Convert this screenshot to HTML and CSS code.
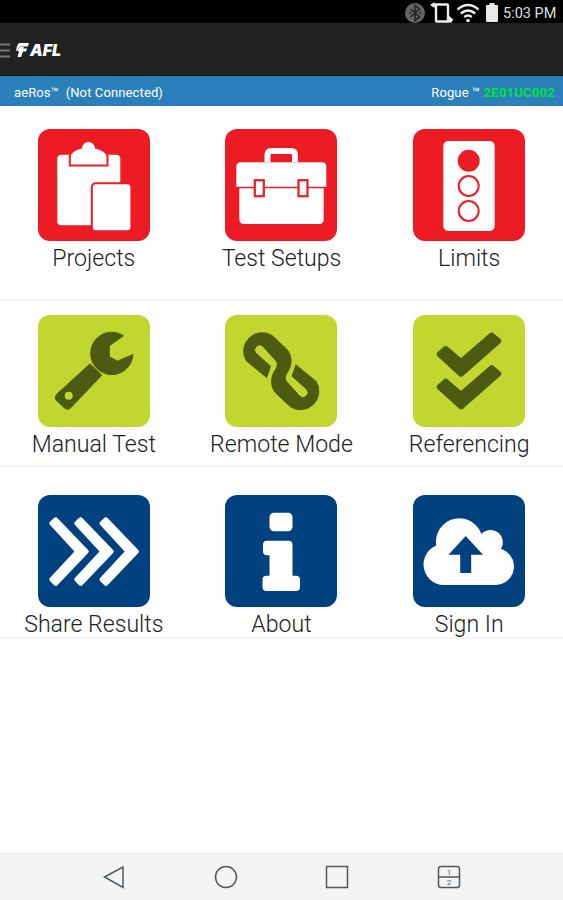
FILE: index.html
```html
<!DOCTYPE html>
<html lang="en">
<head>
    <meta charset="UTF-8">
    <meta name="viewport" content="width=device-width, initial-scale=1.0">
    <title>aeRos</title>
    <link rel="stylesheet" href="styles.css">
</head>
<body>
    <div class="status-bar">
        <svg class="bluetooth" width="20" height="20" viewBox="0 0 20 20">
            <circle cx="10" cy="10" r="10" fill="#646464"/>
            <path d="M5.500 6l9 8-4.500 3.500V2.500L14.500 6l-9 8M4 10h2M14 10h2" fill="none" stroke="#222" stroke-width="1.500"/>
        </svg>
        <svg class="rotate" width="24" height="22" viewBox="0 0 24 22">
            <rect x="6" y="2.500" width="12" height="17" rx="1" fill="none" stroke="#eee" stroke-width="2.400"/>
            <path d="M0 3l4.500-3v1.500H7v3H4.500V6zM23.500 17.500L19 14v2.500h-1.500v4h4.500v-1.500z" fill="#eee"/>
        </svg>
        <svg class="wifi" width="24" height="20" viewBox="0 0 24 20">
            <path d="M1.500 6.500Q12-2.500 22.500 6.500M4.800 10.500Q12 4.300 19.200 10.500M8.200 14Q12 11 15.800 14" fill="none" stroke="#eee" stroke-width="2.400"/>
            <circle cx="12" cy="17.500" r="1.800" fill="#eee"/>
        </svg>
        <svg class="battery" width="12" height="19" viewBox="0 0 12 19">
            <path d="M3.500 0h5v2H11q1 0 1 1v15q0 1-1 1H1q-1 0-1-1V3q0-1 1-1h2.500z" fill="#e8e8e8"/>
        </svg>
        <span class="time">5:03 PM</span>
    </div>

    <div class="header">
        <svg class="menu" width="10" height="15" viewBox="0 0 10 15">
            <path d="M0 1.500h10M0 7.500h10M0 13.500h10" stroke="#777" stroke-width="1.800"/>
        </svg>
        <svg class="logo" width="13" height="14" viewBox="0 0 13 14">
            <path d="M3 0h10l-1.200 3.500H8L7.200 5.500H11L10 8.500H7L5 14H1.500L3 8.500 0 7.500 1 3z" fill="#fff"/>
            <path d="M1 7.500Q3 3 8 3" fill="none" stroke="#777" stroke-width=".7"/>
        </svg>
        <span class="brand">AFL</span>
    </div>

    <div class="connection">
        <span>aeRos™&nbsp; (Not Connected)</span>
        <span>Rogue ™ <b>2E01UC002</b></span>
    </div>

    <div class="main">
        <div class="row row-red">
            <div class="item">
                <svg class="tile" viewBox="0 0 112 112">
                    <rect x="19.300" y="25.700" width="63" height="70.500" rx="4" fill="#fff"/>
                    <path d="M31.800 36.500V27Q33 21 43 18.800Q44.500 12 50.500 12Q56.500 12 58 18.800Q68 21 69.500 27V36.500z" fill="#fff" stroke="#ed1c24" stroke-width="2"/>
                    <rect x="53.800" y="54.200" width="39.600" height="48" rx="4" fill="#fff" stroke="#ed1c24" stroke-width="2"/>
                </svg>
                <span>Projects</span>
            </div>
            <div class="item">
                <svg class="tile" viewBox="0 0 112 112">
                    <path d="M42.500 33V26Q42.500 22 46.500 22H66Q70 22 70 26V33" fill="none" stroke="#fff" stroke-width="6"/>
                    <path d="M16 33.300H97Q101.300 33.300 101.300 38V57.700H11.300V38Q11.300 33.300 16 33.300z" fill="#fff"/>
                    <path d="M14.300 59.200H98.700V90Q98.700 95 94 95H19Q14.300 95 14.300 90z" fill="#fff"/>
                    <rect x="29.800" y="51.200" width="9" height="16" fill="#fff" stroke="#ed1c24" stroke-width="2.200"/>
                    <rect x="73.500" y="51.200" width="9" height="16" fill="#fff" stroke="#ed1c24" stroke-width="2.200"/>
                </svg>
                <span>Test Setups</span>
            </div>
            <div class="item">
                <svg class="tile" viewBox="0 0 112 112">
                    <rect x="30.300" y="12" width="51.400" height="90" rx="5" fill="#fff"/>
                    <g fill="#fff" stroke="#ed1c24" stroke-width="2">
                        <circle cx="55.700" cy="31.700" r="10" fill="#ed1c24"/>
                        <circle cx="55.700" cy="57" r="10"/>
                        <circle cx="55.700" cy="82" r="10"/>
                    </g>
                </svg>
                <span>Limits</span>
            </div>
        </div>

        <div class="row row-green">
            <div class="item">
                <svg class="tile" viewBox="0 0 112 112">
                    <g fill="#4d5a12" stroke="#4d5a12" stroke-width="1" stroke-linejoin="round">
                        <path d="M85.500 20.700A21.200 21.200 0 1 0 95 39.500L79.500 46.200 71.300 41.700V30.700z"/>
                        <path d="M52 48.800L63.800 60.200 33 92.500Q29.500 96 26 92.500L19 86Q15.500 82.500 19 79z"/>
                    </g>
                    <circle cx="30.700" cy="80.700" r="4" fill="#c1d72f"/>
                </svg>
                <span>Manual Test</span>
            </div>
            <div class="item">
                <svg class="tile" viewBox="0 0 112 112">
                    <path d="M41.700 62.500L21.500 46A18.500 18.500 0 0 1 47 20.500L61.500 34C67 40 67.500 49 63 56.500C60.500 60 59.500 63 61 66L75 81.500A5 5 0 0 0 82 74.500L67.100 61.200 70.900 49.900 91.100 66.400A18.500 18.500 0 0 1 65.600 91.900L51.100 78.400C45.600 72.400 45.100 63.400 49.600 55.900C52.100 52.400 53.100 49.400 51.600 46.400L37.600 30.900A5 5 0 0 0 30.600 37.900L45.500 51.200z" fill="#4d5a12" stroke="#4d5a12" stroke-width="1"/>
                </svg>
                <span>Remote Mode</span>
            </div>
            <div class="item">
                <svg class="tile" viewBox="0 0 112 112">
                    <g fill="#4d5a12" stroke="#4d5a12" stroke-width="6" stroke-linejoin="round">
                        <path d="M26.800 39.300L32.700 34 48 47 78.700 20.500 85.200 26 48 58.700z"/>
                        <path d="M26.800 72L32.700 66.700 48 79.700 78.700 53.200 85.200 58.700 48 91.400z"/>
                    </g>
                </svg>
                <span>Referencing</span>
            </div>
        </div>

        <div class="row row-blue">
            <div class="item">
                <svg class="tile" viewBox="0 0 112 112">
                    <g fill="#fff" stroke="#fff" stroke-width="4.500" stroke-linejoin="round">
                        <path d="M13.500 28.300L17.700 24.500 48.500 56.500 17.700 88.700 13.500 84.500 39.500 56.500z"/>
                        <path d="M38.500 28.300L42.700 24.500 73.500 56.500 42.700 88.700 38.500 84.500 64.500 56.500z"/>
                        <path d="M63.700 28.300L67.900 24.500 98.700 56.500 67.900 88.700 63.700 84.500 89.700 56.500z"/>
                    </g>
                </svg>
                <span>Share Results</span>
            </div>
            <div class="item">
                <svg class="tile" viewBox="0 0 112 112">
                    <rect x="44.500" y="17.700" width="23" height="18.600" rx="4.500" fill="#fff"/>
                    <path d="M42 45.700H63.500Q67.500 45.700 67.500 49.700V80.700H71Q75 80.700 75 84.700V92Q75 96 71 96H41.500Q37.500 96 37.500 92V84.700Q37.500 80.700 41.500 80.700H44.500V60.300H42Q38 60.300 38 56.300V49.700Q38 45.700 42 45.700z" fill="#fff"/>
                </svg>
                <span>About</span>
            </div>
            <div class="item">
                <svg class="tile" viewBox="0 0 112 112">
                    <g fill="#fff">
                        <circle cx="31" cy="69.500" r="20.500"/>
                        <circle cx="46.300" cy="46.700" r="23.400"/>
                        <circle cx="77.500" cy="47.200" r="12.300"/>
                        <circle cx="82.500" cy="71.500" r="18.500"/>
                        <rect x="31" y="48" width="51.500" height="42"/>
                    </g>
                    <path d="M52.700 41L70 59.800H58.200V78H47.200V59.800H35.500z" fill="#004280"/>
                </svg>
                <span>Sign In</span>
            </div>
        </div>
    </div>

    <div class="nav-bar">
        <svg width="24" height="24" viewBox="0 0 24 24"><path d="M2.500 12L21 2V22.500z"/></svg>
        <svg width="24" height="24" viewBox="0 0 24 24"><circle cx="12" cy="12" r="10.500"/></svg>
        <svg width="24" height="24" viewBox="0 0 24 24"><rect x="1.500" y="1.500" width="21" height="21"/></svg>
        <svg width="24" height="24" viewBox="0 0 24 24">
            <rect x="1.500" y="1.500" width="21" height="21" rx="2.500"/>
            <path d="M1.500 12h21"/>
            <text x="12" y="9.500">1</text>
            <text x="12" y="20">2</text>
        </svg>
    </div>
</body>
</html>
```
FILE: styles.css
```css
* {
    box-sizing: border-box;
}

body {
    margin: 0;
    height: 100vh;
    display: flex;
    flex-direction: column;
    background-color: #fff;
    font-family: Roboto, sans-serif;
    overflow: hidden;
}

svg {
    display: block;
    flex-shrink: 0;
}

.status-bar {
    height: 23px;
    display: flex;
    align-items: center;
    justify-content: flex-end;
    padding: 2px 6px 0 0;
    background-color: #000;
    color: #ddd;
}

.bluetooth {
    margin-right: 5px;
}

.rotate {
    margin-right: 2px;
}

.wifi {
    margin-right: 6px;
}

.battery {
    margin-right: 5px;
}

.time {
    padding-top: 1px;
    font-size: 14.5px;
    width: 54px;
    white-space: nowrap;
}

.header {
    height: 53px;
    display: flex;
    align-items: center;
    padding-top: 2px;
    background-color: #222;
    border-bottom: 1px solid #15110e;
}

.logo {
    margin-left: 6px;
}

.brand {
    margin-left: 1px;
    color: #fff;
    font-family: Inter, sans-serif;
    font-size: 16px;
    font-weight: 900;
    font-style: italic;
}

.connection {
    height: 30px;
    display: flex;
    align-items: center;
    justify-content: space-between;
    padding: 2px 8px 0 14px;
    background-color: #2b7fba;
    color: #fff;
    font-size: 13px;
    letter-spacing: 0.12px;
}

.connection b {
    color: #00e43a;
    font-weight: 700;
    letter-spacing: 0.25px;
}

.main {
    flex: 1;
}

.row {
    display: grid;
    grid-template-columns: repeat(3, 1fr);
    border-bottom: 2px solid #f5f5f5;
}

.row-red {
    height: 195px;
    padding-top: 23px;
}

.row-green {
    height: 166px;
    padding-top: 14px;
}

.row-blue {
    height: 172px;
    padding-top: 28px;
}

.item {
    display: flex;
    flex-direction: column;
    align-items: center;
    color: #222;
    font-size: 23.1px;
    font-weight: 300;
    line-height: 32px;
    white-space: nowrap;
}

.item span {
    margin: 2px 0 -5px;
}

.tile {
    width: 112px;
    height: 112px;
    border-radius: 12px;
}

.row-red .tile {
    background-color: #ed1c24;
}

.row-green .tile {
    background-color: #c1d72f;
}

.row-blue .tile {
    background-color: #004280;
}

.nav-bar {
    height: 47px;
    display: grid;
    grid-template-columns: repeat(4, 1fr);
    align-items: center;
    justify-items: center;
    padding: 0 58px;
    background-color: #f4f4f4;
    border-top: 1px solid #eee;
}

.nav-bar svg {
    fill: none;
    stroke: #505a60;
    stroke-width: 1.5;
}

.nav-bar text {
    fill: #505a60;
    stroke: none;
    font-size: 8px;
    text-anchor: middle;
}
```
